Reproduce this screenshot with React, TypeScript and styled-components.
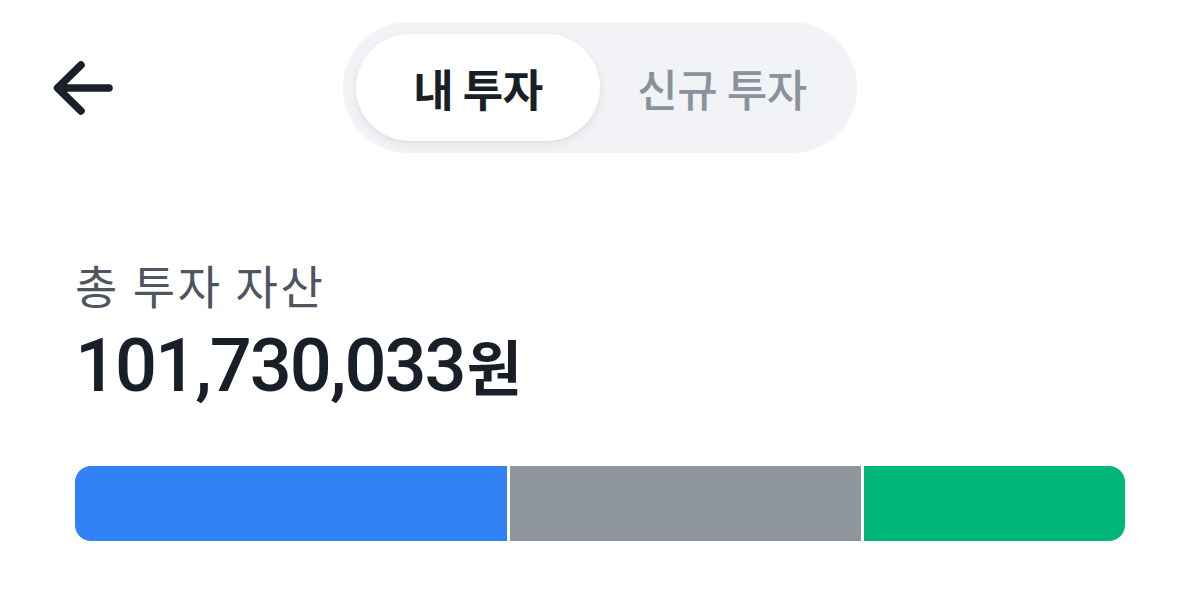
import React, { useState } from "react";
import styled, { createGlobalStyle } from "styled-components";

const GlobalStyle = createGlobalStyle`
  html, body {
    margin: 0;
    padding: 0;
    background: #ffffff;
  }
  body {
    font-family: Inter, "Noto Sans CJK KR", "Noto Sans", sans-serif;
    color: #191f28;
    -webkit-font-smoothing: antialiased;
  }
`;

const Page = styled.div`
  width: 1200px;
  height: 597px;
  background: #ffffff;
  overflow: hidden;
`;

const Header = styled.header`
  display: grid;
  grid-template-columns: 1fr auto 1fr;
  align-items: center;
  padding: 22px 0 0 50px;
`;

const BackButton = styled.button`
  justify-self: start;
  display: flex;
  align-items: center;
  justify-content: center;
  width: 64px;
  height: 64px;
  padding: 0;
  border: none;
  background: transparent;
  cursor: pointer;
`;

const Segmented = styled.div`
  display: grid;
  grid-template-columns: 244px 244px;
  padding: 12px 13px;
  height: 131px;
  box-sizing: border-box;
  border-radius: 66px;
  background: #f2f3f6;
  margin-right: 50px;
`;

const Tab = styled.button<{ $active: boolean }>`
  border: none;
  border-radius: 54px;
  background: ${(p) => (p.$active ? "#ffffff" : "transparent")};
  box-shadow: ${(p) =>
    p.$active ? "0 3px 10px rgba(0, 20, 50, 0.08), 0 1px 2px rgba(0,0,0,0.04)" : "none"};
  color: ${(p) => (p.$active ? "#191f28" : "#8b929c")};
  font-family: "Noto Sans CJK KR", sans-serif;
  font-weight: ${(p) => (p.$active ? 700 : 500)};
  font-size: 44px;
  letter-spacing: -0.5px;
  cursor: pointer;
  padding: 0;
`;

const Summary = styled.section`
  padding: 102px 75px 0 75px;
`;

const Label = styled.div`
  font-family: "Noto Sans CJK KR", sans-serif;
  font-size: 46px;
  line-height: 58px;
  font-weight: 400;
  letter-spacing: 2.6px;
  color: #4e5560;
`;

const Amount = styled.div`
  margin-top: 12px;
  font-family: Roboto, "Noto Sans CJK KR", sans-serif;
  font-size: 74px;
  line-height: 80px;
  font-weight: 500;
  letter-spacing: -2px;
  color: #191f28;
`;

const Won = styled.span`
  font-family: "Noto Sans CJK KR", sans-serif;
  font-size: 60px;
  font-weight: 700;
  letter-spacing: 0;
  margin-left: 2px;
`;

const Bar = styled.div`
  margin-top: 60px;
  display: flex;
  gap: 3px;
  height: 75px;
  border-radius: 16px;
  overflow: hidden;
`;

const Segment = styled.div<{ $color: string }>`
  background: ${(p) => p.$color};
  height: 100%;
`;

const segments = [
  { color: "#3182f6", width: 432 },
  { color: "#8f959d", width: 351 },
  { color: "#00b67a", width: 261 },
];

export default function App() {
  const [tab, setTab] = useState(0);
  return (
    <Page>
      <GlobalStyle />
      <Header>
        <BackButton aria-label="뒤로">
          <svg width="64" height="64" viewBox="0 0 64 64" fill="none">
            <path
              d="M31 9 L7.5 32 L31 55 M8 32 H59"
              stroke="#1b1f27"
              strokeWidth="7.5"
              strokeLinecap="round"
              strokeLinejoin="round"
            />
          </svg>
        </BackButton>
        <Segmented>
          <Tab $active={tab === 0} onClick={() => setTab(0)}>
            내 투자
          </Tab>
          <Tab $active={tab === 1} onClick={() => setTab(1)}>
            신규 투자
          </Tab>
        </Segmented>
        <div />
      </Header>
      <Summary>
        <Label>총 투자 자산</Label>
        <Amount>
          101,730,033<Won>원</Won>
        </Amount>
        <Bar>
          {segments.map((s, i) => (
            <Segment key={i} $color={s.color} style={{ flex: `${s.width} 0 0` }} />
          ))}
        </Bar>
      </Summary>
    </Page>
  );
}
